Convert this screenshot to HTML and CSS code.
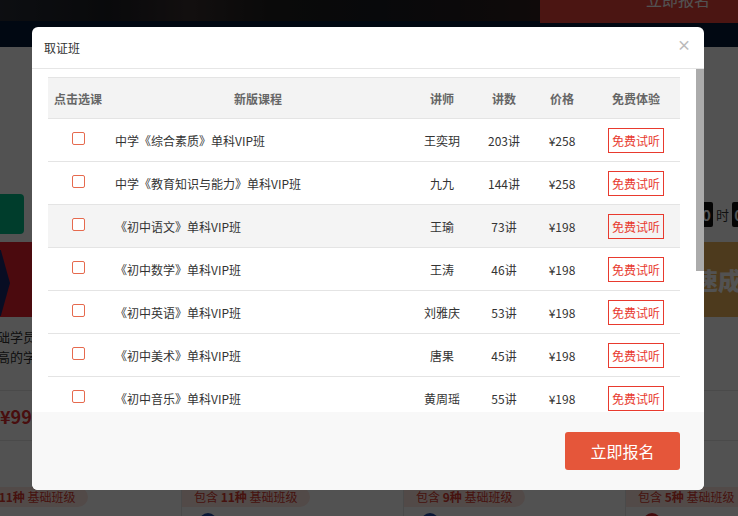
FILE: index.html
```html
<!DOCTYPE html>
<html lang="zh-CN">
<head>
<meta charset="utf-8">
<title>取证班</title>
<link rel="stylesheet" href="styles.css">
</head>
<body>
<div class="page">
  <header class="topbar">
    <div class="hero"></div>
    <div class="top-cta"><span>立即报名</span></div>
  </header>
  <div class="navbar"></div>

  <section class="promo">
    <div class="promo-head">
      <div class="buy-btn"></div>
      <div class="timer"><span class="num">00</span><span class="unit">时</span><span class="num">00</span></div>
    </div>
    <div class="cards">
      <article class="card">
        <div class="thumb thumb-red"><div class="chevron"></div></div>
        <div class="desc"><p>零基础学员</p><p>要求高的学</p></div>
        <div class="price-row"><span class="price">¥999</span></div>
        <div class="card-foot"><span class="tag">包含 <b>11种</b> 基础班级</span><i class="dot dot-blue"></i></div>
      </article>
      <article class="card">
        <div class="thumb thumb-blue"></div>
        <div class="desc"></div>
        <div class="price-row"></div>
        <div class="card-foot"><span class="tag">包含 <b>11种</b> 基础班级</span><i class="dot dot-blue"></i></div>
      </article>
      <article class="card">
        <div class="thumb thumb-blue"></div>
        <div class="desc"></div>
        <div class="price-row"></div>
        <div class="card-foot"><span class="tag">包含 <b>9种</b> 基础班级</span><i class="dot dot-blue"></i></div>
      </article>
      <article class="card">
        <div class="thumb thumb-gold"><span class="thumb-title">速成</span></div>
        <div class="desc"></div>
        <div class="price-row"></div>
        <div class="card-foot"><span class="tag">包含 <b>5种</b> 基础班级</span><i class="dot dot-red"></i></div>
      </article>
    </div>
  </section>

  <div class="shade"></div>

  <div class="modal">
    <div class="modal-head">
      <h2 class="modal-title">取证班</h2>
      <span class="modal-close">×</span>
    </div>
    <div class="modal-body">
      <div class="scroll-content">
        <div class="course-table">
          <div class="row row-head">
            <span>点击选课</span><span>新版课程</span><span>讲师</span><span>讲数</span><span>价格</span><span>免费体验</span>
          </div>
          <div class="row">
            <span><input type="checkbox" class="pick"></span><span class="name">中学《综合素质》单科VIP班</span><span>王奕玥</span><span>203讲</span><span>¥258</span><span><a class="try">免费试听</a></span>
          </div>
          <div class="row">
            <span><input type="checkbox" class="pick"></span><span class="name">中学《教育知识与能力》单科VIP班</span><span>九九</span><span>144讲</span><span>¥258</span><span><a class="try">免费试听</a></span>
          </div>
          <div class="row row-hover">
            <span><input type="checkbox" class="pick"></span><span class="name">《初中语文》单科VIP班</span><span>王瑜</span><span>73讲</span><span>¥198</span><span><a class="try">免费试听</a></span>
          </div>
          <div class="row">
            <span><input type="checkbox" class="pick"></span><span class="name">《初中数学》单科VIP班</span><span>王涛</span><span>46讲</span><span>¥198</span><span><a class="try">免费试听</a></span>
          </div>
          <div class="row">
            <span><input type="checkbox" class="pick"></span><span class="name">《初中英语》单科VIP班</span><span>刘雅庆</span><span>53讲</span><span>¥198</span><span><a class="try">免费试听</a></span>
          </div>
          <div class="row">
            <span><input type="checkbox" class="pick"></span><span class="name">《初中美术》单科VIP班</span><span>唐果</span><span>45讲</span><span>¥198</span><span><a class="try">免费试听</a></span>
          </div>
          <div class="row">
            <span><input type="checkbox" class="pick"></span><span class="name">《初中音乐》单科VIP班</span><span>黄周瑶</span><span>55讲</span><span>¥198</span><span><a class="try">免费试听</a></span>
          </div>
        </div>
      </div>
      <div class="scrollbar"><div class="scrollbar-thumb"></div></div>
    </div>
    <div class="modal-foot">
      <button class="enroll">立即报名</button>
    </div>
  </div>
</div>
</body>
</html>
```

FILE: styles.css
```css
* { box-sizing: border-box; }
body {
  margin: 0;
  font-family: "Noto Sans CJK SC", "Noto Sans", sans-serif;
}
p, h2 { margin: 0; }

.page {
  position: relative;
  width: 738px;
  height: 516px;
  overflow: hidden;
  background: #fff;
}

/* ---------- page behind the dialog ---------- */
.topbar {
  display: flex;
  height: 23px;
  background: #061938;
}
.hero {
  flex: 1;
  height: 21px;
  background: linear-gradient(90deg, #2a2e38 0%, #1d1f25 20%, #3a3030 35%, #202020 50%, #1a1c22 70%, #302020 100%);
}
.top-cta {
  width: 276px;
  margin-right: -78px;
  background: #ea4238;
  color: #fff;
  font-size: 16px;
  line-height: 16px;
  text-align: center;
  overflow: hidden;
}
.top-cta span { display: block; margin-top: -9px; }
.navbar { height: 24px; background: #061938; }

.promo { padding-top: 147px; }
.promo-head {
  display: flex;
  justify-content: space-between;
  align-items: center;
  height: 40px;
}
.buy-btn {
  width: 84px;
  height: 40px;
  margin-left: -60px;
  background: #00be89;
  border-radius: 0 4px 4px 0;
}
.timer {
  display: flex;
  align-items: center;
  gap: 3px;
  margin-right: -16px;
  font-size: 13px;
}
.timer .num {
  width: 22px;
  height: 25px;
  background: #111;
  color: #fff;
  font-weight: bold;
  font-size: 15px;
  line-height: 25px;
  text-align: center;
  border-radius: 2px;
}
.timer .unit { color: #333; }

.cards {
  display: flex;
  margin-left: -41px;
  margin-top: 8px;
}
.card { flex: 0 0 222px; }
.thumb { height: 75px; position: relative; overflow: hidden; }
.thumb-red { background: #ea1f2c; }
.thumb-blue { background: #213f90; }
.thumb-gold { background: #f0b55b; display: flex; align-items: center; padding-left: 69px; }
.thumb-title { font-size: 24px; font-weight: 900; color: #fff; }
.chevron {
  position: absolute;
  left: 0;
  top: 8px;
  width: 51px;
  height: 66px;
  background: #1b2a6e;
  clip-path: polygon(0 0, 82% 0, 100% 50%, 82% 100%, 0 100%);
}
.desc {
  height: 73px;
  padding: 10px 0 0 12px;
  font-size: 13px;
  line-height: 20px;
  color: #333;
  white-space: nowrap;
}
.price-row {
  height: 51px;
  padding-left: 41px;
  border-top: 1px solid #e6e6e6;
  border-bottom: 1px solid #e6e6e6;
  display: flex;
  align-items: center;
}
.price { color: #e02c2c; font-weight: bold; font-size: 18px; }
.card-foot {
  margin-top: 29px;
  padding-top: 13px;
  height: 80px;
  border-left: 1px solid #e6e6e6;
}
.tag {
  display: inline-block;
  height: 20px;
  line-height: 20px;
  padding: 0 12px;
  background: #fde6e1;
  color: #d93a2f;
  font-size: 12px;
  border-radius: 0 10px 10px 0;
}
.tag b { font-weight: bold; }
.dot {
  display: block;
  width: 18px;
  height: 18px;
  margin: 6px 0 0 17px;
  border-radius: 50%;
}
.dot-blue { background: #1e4aa8; }
.dot-red { background: #d0242b; }

.shade {
  position: absolute;
  inset: 0;
  background: rgba(0, 0, 0, 0.68);
}

/* ---------- dialog ---------- */
.modal {
  position: absolute;
  left: 32px;
  top: 27px;
  width: 672px;
  height: 463px;
  background: #fff;
  border-radius: 6px;
  overflow: hidden;
  display: flex;
  flex-direction: column;
}
.modal-head {
  flex: 0 0 42px;
  display: flex;
  justify-content: space-between;
  align-items: center;
  padding: 0 13px 0 12px;
  border-bottom: 1px solid #e6e6e6;
}
.modal-title {
  font-size: 12px;
  font-weight: normal;
  color: #333;
}
.modal-close {
  align-self: flex-start;
  margin-top: 9px;
  font-size: 14px;
  line-height: 16px;
  font-weight: bold;
  color: #bbb;
}
.modal-body {
  flex: 0 0 343px;
  display: flex;
  overflow: hidden;
}
.scroll-content {
  flex: 1;
  padding: 8px 16px 0;
  overflow: hidden;
}
.scrollbar {
  flex: 0 0 8px;
  background: #fff;
}
.scrollbar-thumb {
  height: 202px;
  background: #ababab;
}

.course-table { width: 632px; font-size: 12px; color: #333; }
.row {
  display: grid;
  grid-template-columns: 60px 300px 68px 56px 60px 88px;
  align-items: center;
  height: 43px;
  border-bottom: 1px solid #e4e4e4;
  text-align: center;
}
.row-head {
  height: 42px;
  border-top: 1px solid #e4e4e4;
  background: #f3f3f3;
  color: #666;
  font-weight: bold;
}
.row-hover { background: #f4f4f4; }
.row .name { text-align: left; padding-left: 7px; }
.pick {
  appearance: none;
  -webkit-appearance: none;
  display: block;
  width: 13px;
  height: 13px;
  margin: 0 auto 3px;
  border: 1px solid #e66a4e;
  border-radius: 2px;
  background: #fff;
}
.try {
  display: inline-block;
  height: 25px;
  line-height: 23px;
  padding: 0 3px;
  border: 1px solid #e83a2e;
  color: #e83a2e;
  font-size: 12px;
}

.modal-foot {
  flex: 1;
  background: #f8f8f8;
  display: flex;
  justify-content: flex-end;
  align-items: flex-start;
  padding: 20px 24px 0 0;
}
.enroll {
  width: 115px;
  height: 38px;
  border: 0;
  border-radius: 3px;
  background: #e5563a;
  color: #fff;
  font-family: inherit;
  font-size: 16px;
  cursor: pointer;
}
```
